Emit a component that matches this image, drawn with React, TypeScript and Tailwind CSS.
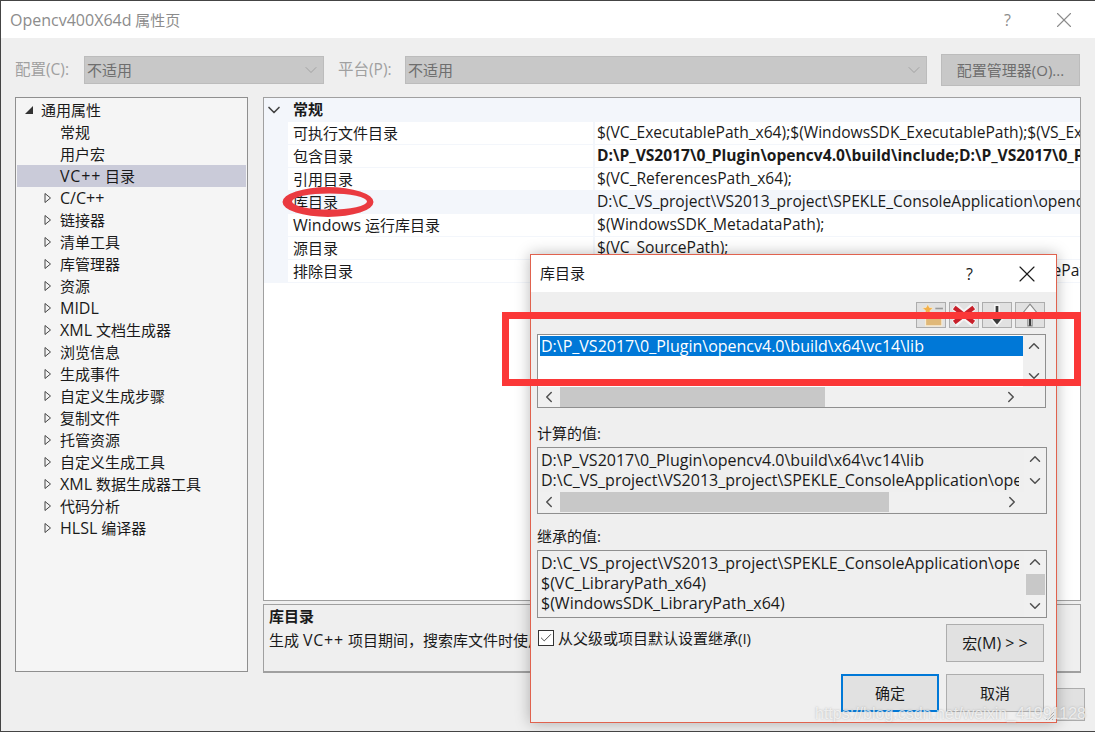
import { ChevronDown, ChevronLeft, ChevronRight, ChevronUp, Check, X } from 'lucide-react';

const font = 'font-["Open_Sans","Noto_Sans_CJK_SC",sans-serif]';

const treeItems = [
  { latin: 'C/C++', label: '' },
  { latin: '', label: '链接器' },
  { latin: '', label: '清单工具' },
  { latin: '', label: '库管理器' },
  { latin: '', label: '资源' },
  { latin: 'MIDL', label: '' },
  { latin: 'XML', label: ' 文档生成器' },
  { latin: '', label: '浏览信息' },
  { latin: '', label: '生成事件' },
  { latin: '', label: '自定义生成步骤' },
  { latin: '', label: '复制文件' },
  { latin: '', label: '托管资源' },
  { latin: '', label: '自定义生成工具' },
  { latin: 'XML', label: ' 数据生成器工具' },
  { latin: '', label: '代码分析' },
  { latin: 'HLSL', label: ' 编译器' },
];

const rows = [
  { name: '可执行文件目录', value: '$(VC_ExecutablePath_x64);$(WindowsSDK_ExecutablePath);$(VS_ExecutablePath);$(MSBuild)' },
  { name: '包含目录', value: 'D:\\P_VS2017\\0_Plugin\\opencv4.0\\build\\include;D:\\P_VS2017\\0_Plugin\\opencv4.0\\build', bold: true },
  { name: '引用目录', value: '$(VC_ReferencesPath_x64);' },
  { name: '库目录', value: 'D:\\C_VS_project\\VS2013_project\\SPEKLE_ConsoleApplication\\opencv\\lib;$(VC_LibraryPath)', tint: true },
  { name: 'Windows 运行库目录', latin: 'Windows', value: '$(WindowsSDK_MetadataPath);' },
  { name: '源目录', value: '$(VC_SourcePath);' },
  { name: '排除目录', value: '$(CommonExcludePath);$(VC_ExecutablePath_x64);$(VC_IncludePath)' },
];

function TreeRow({ latin, label }: { latin: string; label: string }) {
  return (
    <div className="flex h-[22px] items-center">
      <svg width="10" height="12" viewBox="0 0 10 12" className="ml-[27px] mr-[7px] shrink-0">
        <path d="M2 1.5 L7.5 6 L2 10.5 Z" fill="none" stroke="#444" strokeWidth="1" />
      </svg>
      <span className="whitespace-pre">
        {latin && <span className="text-[16px]">{latin}</span>}
        {label}
      </span>
    </div>
  );
}

function ToolButton({ children }: { children: React.ReactNode }) {
  return (
    <div className="flex h-[26px] w-[30px] items-center justify-center border border-[#adadad] bg-[#e1e1e1]">
      {children}
    </div>
  );
}

function VScroll({ thumb }: { thumb?: boolean }) {
  return (
    <div className="flex w-[22px] shrink-0 flex-col items-center justify-between bg-[#f0f0f0] py-[2px]">
      <ChevronUp size={18} strokeWidth={2} className="text-[#505050]" />
      {thumb && <div className="h-[21px] w-[19px] bg-[#c8c8c8]" />}
      <ChevronDown size={18} strokeWidth={2} className="text-[#505050]" />
    </div>
  );
}

function HScroll({ thumbWidth }: { thumbWidth: string }) {
  return (
    <div className="flex h-[20px] items-center bg-[#f0f0f0]">
      <div className="flex w-[22px] justify-center">
        <ChevronLeft size={18} strokeWidth={2} className="text-[#505050]" />
      </div>
      <div className={`h-full bg-[#c8c8c8] ${thumbWidth}`} />
      <div className="flex-1" />
      <div className="flex w-[68px] justify-center">
        <ChevronRight size={18} strokeWidth={2} className="text-[#505050]" />
      </div>
    </div>
  );
}

export default function App() {
  return (
    <div className={`relative h-[732px] w-[1095px] overflow-hidden border-b border-l border-t border-[#444] bg-[#efefef] text-[15px] leading-none text-[#1a1a1a] ${font}`}>
      {/* title bar */}
      <div className="flex h-[37px] items-center justify-between bg-white pl-[9px] pr-[18px] text-[#8c8c8c]">
        <span>
          <span className="text-[16px]">Opencv400X64d</span> 属性页
        </span>
        <div className="flex items-center gap-[40px]">
          <span className="text-[16px]">?</span>
          <X size={26} strokeWidth={1} />
        </div>
      </div>

      {/* config row */}
      <div className="mt-[16px] flex h-[32px] items-center pl-[14px] text-[#6e6e6e]">
        <span className="w-[69px] text-[15.5px] text-[#a0a0a0]">配置(C):</span>
        <div className="flex h-[28px] w-[240px] items-center justify-between border border-[#bcbcbc] bg-[#c8c8c8] pl-[2px] pr-[2px]">
          <span>不适用</span>
          <ChevronDown size={20} strokeWidth={1} className="text-[#9a9a9a]" />
        </div>
        <span className="ml-[14px] w-[67px] text-[15.5px] text-[#a0a0a0]">平台(P):</span>
        <div className="flex h-[28px] w-[522px] items-center justify-between border border-[#bcbcbc] bg-[#c8c8c8] pl-[2px] pr-[2px]">
          <span>不适用</span>
          <ChevronDown size={20} strokeWidth={1} className="text-[#9a9a9a]" />
        </div>
        <div className="ml-[14px] flex h-[32px] w-[139px] items-center justify-center border border-[#bcbcbc] bg-[#c8c8c8]">
          配置管理器(O)...
        </div>
      </div>

      {/* main */}
      <div className="mt-[11px] flex gap-[15px] pl-[14px]">
        <div className="h-[575px] w-[233px] border border-[#8f8f8f] bg-[#f5f5f5] pt-[1px]">
          <div className="flex h-[22px] items-center">
            <svg width="10" height="10" viewBox="0 0 10 10" className="ml-[8px] mr-[7px] shrink-0">
              <path d="M9 1 V9 H1 Z" fill="#333" />
            </svg>
            <span>通用属性</span>
          </div>
          <div className="flex h-[22px] items-center pl-[44px]">常规</div>
          <div className="flex h-[22px] items-center pl-[44px]">用户宏</div>
          <div className="mx-[1px] flex h-[22px] items-center bg-[#cacbd9] pl-[43px]">
            <span className="text-[16px] tracking-[0.8px]">VC++</span>&nbsp;目录
          </div>
          {treeItems.map((t) => (
            <TreeRow key={t.latin + t.label} latin={t.latin} label={t.label} />
          ))}
        </div>

        <div className="flex w-[818px] flex-col gap-[3px]">
          <div className="h-[504px] overflow-hidden border border-[#a0a0a0] bg-white">
            <div className="flex h-[24px] items-center bg-[#f3f6fb] pb-[1px] font-bold">
              <ChevronDown size={20} strokeWidth={2} className="mr-[9px] text-[#444]" />
              <span>常规</span>
            </div>
            {rows.map((r) => (
              <div key={r.name} className="flex h-[23px]">
                <div className="w-[24px] shrink-0 bg-[#f3f6fb]" />
                <div className={`flex w-[305px] shrink-0 items-center whitespace-pre border-b border-[#f3f6fb] pl-[5px] ${r.tint ? 'bg-[#f3f6fb]' : ''}`}>
                  {r.latin ? (
                    <>
                      <span className="text-[16px]">{r.latin}</span> 运行库目录
                    </>
                  ) : (
                    r.name
                  )}
                </div>
                <div className={`flex min-w-0 flex-1 items-center overflow-hidden whitespace-nowrap border-b border-l-2 border-[#f3f6fb] pl-[2px] text-[15.6px] ${r.tint ? 'bg-[#f3f6fb]' : ''} ${r.bold ? 'font-bold' : ''}`}>
                  {r.value}
                </div>
              </div>
            ))}
          </div>
          <div className="h-[69px] border border-b-2 border-[#a0a0a0] bg-[#efefef] pl-[5px] pt-[4px]">
            <div className="font-bold">库目录</div>
            <div className="mt-[8px] whitespace-nowrap">
              生成 <span className="text-[16px] tracking-[0.8px]">VC++</span> 项目期间，搜索库文件时使用的路径。
            </div>
          </div>
        </div>
      </div>

      {/* footer button behind the dialog */}
      <div className="mt-[15px] flex justify-end pr-[10px]">
        <div className="flex h-[33px] w-[98px] items-center justify-center border border-[#adadad] bg-[#e1e1e1]">应用</div>
      </div>

      {/* child dialog */}
      <div className="absolute left-[529px] top-[253px] flex h-[469px] w-[527px] flex-col border border-[#e0624e] bg-[#efefef] shadow-[0_0_14px_rgba(0,0,0,0.28)]">
        <div className="flex h-[37px] shrink-0 items-center justify-between bg-white pl-[9px] pr-[15px]">
          <span>库目录</span>
          <div className="flex items-center gap-[40px]">
            <span className="text-[16px]">?</span>
            <X size={28} strokeWidth={1} />
          </div>
        </div>

        <div className="mt-[10px] flex justify-end gap-[3px] pr-[11px]">
          <ToolButton>
            <svg width="26" height="24" viewBox="0 0 24 22">
              <path d="M7 9 H22 V21 H7 Z" fill="#e0b878" stroke="#f8ecd4" strokeWidth="1" />
              <path d="M16 5 H23" stroke="#9a9a9a" strokeWidth="1.5" />
              <path d="M9 1 L10.5 4 L14 4.5 L11 7 L12 10 L9 8.5 L6 10 L7 7 L4 4.5 L7.5 4 Z" fill="#f2b04a" stroke="#f8ecd4" strokeWidth="0.6" />
            </svg>
          </ToolButton>
          <ToolButton>
            <svg width="26" height="24" viewBox="0 0 24 22">
              <path d="M3 3 L21 19 M21 3 L3 19" stroke="#f4f4f4" strokeWidth="7" />
              <path d="M3 4 L21 18 M21 4 L3 18" stroke="#c8202a" strokeWidth="4" />
            </svg>
          </ToolButton>
          <ToolButton>
            <svg width="26" height="24" viewBox="0 0 24 22">
              <path d="M10 2 H14 V10 H21 L12 21 L3 10 H10 Z" fill="#3a3a3a" stroke="#f6f6f6" strokeWidth="1.5" />
            </svg>
          </ToolButton>
          <ToolButton>
            <svg width="26" height="24" viewBox="0 0 24 22">
              <path d="M12 1 L21 12 H14 V21 H10 V12 H3 Z" fill="#f6f6f6" stroke="#8a8a8a" strokeWidth="1" />
              <path d="M11 10 H13 V21 H11 Z" fill="#3a3a3a" />
            </svg>
          </ToolButton>
        </div>

        <div className="ml-[6px] mt-[6px] h-[74px] w-[509px] border border-[#8f8f8f] bg-white">
          <div className="flex h-[52px]">
            <div className="min-w-0 flex-1 pl-[2px] pt-[1px]">
              <div className="flex h-[20px] items-center whitespace-nowrap bg-[#0078d7] pl-[1px] text-[16px] text-white">
                D:\P_VS2017\0_Plugin\opencv4.0\build\x64\vc14\lib
              </div>
            </div>
            <VScroll />
          </div>
          <HScroll thumbWidth="w-[265px]" />
        </div>

        <div className="ml-[6px] mt-[18px] h-[15px]">计算的值:</div>
        <div className="ml-[6px] mt-[6px] h-[67px] w-[510px] border border-[#8f8f8f] bg-[#efefef]">
          <div className="flex h-[44px]">
            <div className="min-w-0 flex-1 whitespace-nowrap pl-[3px] pr-[5px] pt-[2px] text-[16px] leading-[20px]">
              <div>D:\P_VS2017\0_Plugin\opencv4.0\build\x64\vc14\lib</div>
              <div className="overflow-hidden">D:\C_VS_project\VS2013_project\SPEKLE_ConsoleApplication\opencv</div>
            </div>
            <VScroll />
          </div>
          <HScroll thumbWidth="w-[329px]" />
        </div>

        <div className="ml-[6px] mt-[15px] h-[15px]">继承的值:</div>
        <div className="ml-[6px] mt-[6px] flex h-[68px] w-[510px] border border-[#8f8f8f] bg-[#efefef]">
          <div className="min-w-0 flex-1 whitespace-nowrap pl-[3px] pr-[5px] pt-[2px] text-[16px] leading-[20px]">
            <div className="overflow-hidden">D:\C_VS_project\VS2013_project\SPEKLE_ConsoleApplication\opencv</div>
            <div>$(VC_LibraryPath_x64)</div>
            <div>$(WindowsSDK_LibraryPath_x64)</div>
          </div>
          <VScroll thumb />
        </div>

        <div className="mt-[6px] flex h-[38px] pl-[7px] pr-[12px]">
          <div className="mt-[6px] flex h-[16px] w-[16px] items-center justify-center border border-[#333] bg-white">
            <Check size={14} strokeWidth={1.5} className="text-[#333]" />
          </div>
          <span className="ml-[4px] mt-[7px]">从父级或项目默认设置继承(I)</span>
          <div className="ml-auto flex h-[38px] w-[98px] items-center justify-center border border-[#adadad] bg-[#e1e1e1]">
            宏<span className="text-[16px]">(M) &gt; &gt;</span>
          </div>
        </div>

        <div className="mt-[12px] flex justify-end gap-[7px] pr-[12px]">
          <div className="flex h-[38px] w-[98px] items-center justify-center border-2 border-[#0078d7] bg-[#e1e1e1]">确定</div>
          <div className="flex h-[38px] w-[98px] items-center justify-center border border-[#adadad] bg-[#e1e1e1]">取消</div>
        </div>

        {/* resize grip */}
        <svg width="10" height="10" viewBox="0 0 10 10" className="absolute bottom-[1px] right-[1px]">
          <path d="M9 1 L1 9 M9 4 L4 9 M9 7 L7 9" stroke="#b0b0b0" strokeWidth="1" />
        </svg>
      </div>

      {/* red annotations */}
      <svg width="96" height="34" viewBox="0 0 96 34" className="absolute left-[280px] top-[184px]">
        <path
          fillRule="evenodd"
          fill="#ea3a40"
          d="M1.5 17 A45.5 15 0 1 1 92.5 17 A45.5 15 0 1 1 1.5 17 Z M11 16.5 A37.5 8 0 1 0 86 16.5 A37.5 8 0 1 0 11 16.5 Z"
        />
      </svg>
      <div className="absolute left-[501px] top-[311px] h-[74px] w-[579px] border-[7px] border-[#fb3737]" />

      {/* watermark */}
      <div className='absolute left-[814px] top-[703px] whitespace-nowrap font-["Liberation_Sans",sans-serif] text-[16px] leading-[20px] text-white/70 [text-shadow:0_0_2px_rgba(120,120,120,0.5)]'>
        https://blog.csdn.net/weixin_41991128
      </div>
    </div>
  );
}
